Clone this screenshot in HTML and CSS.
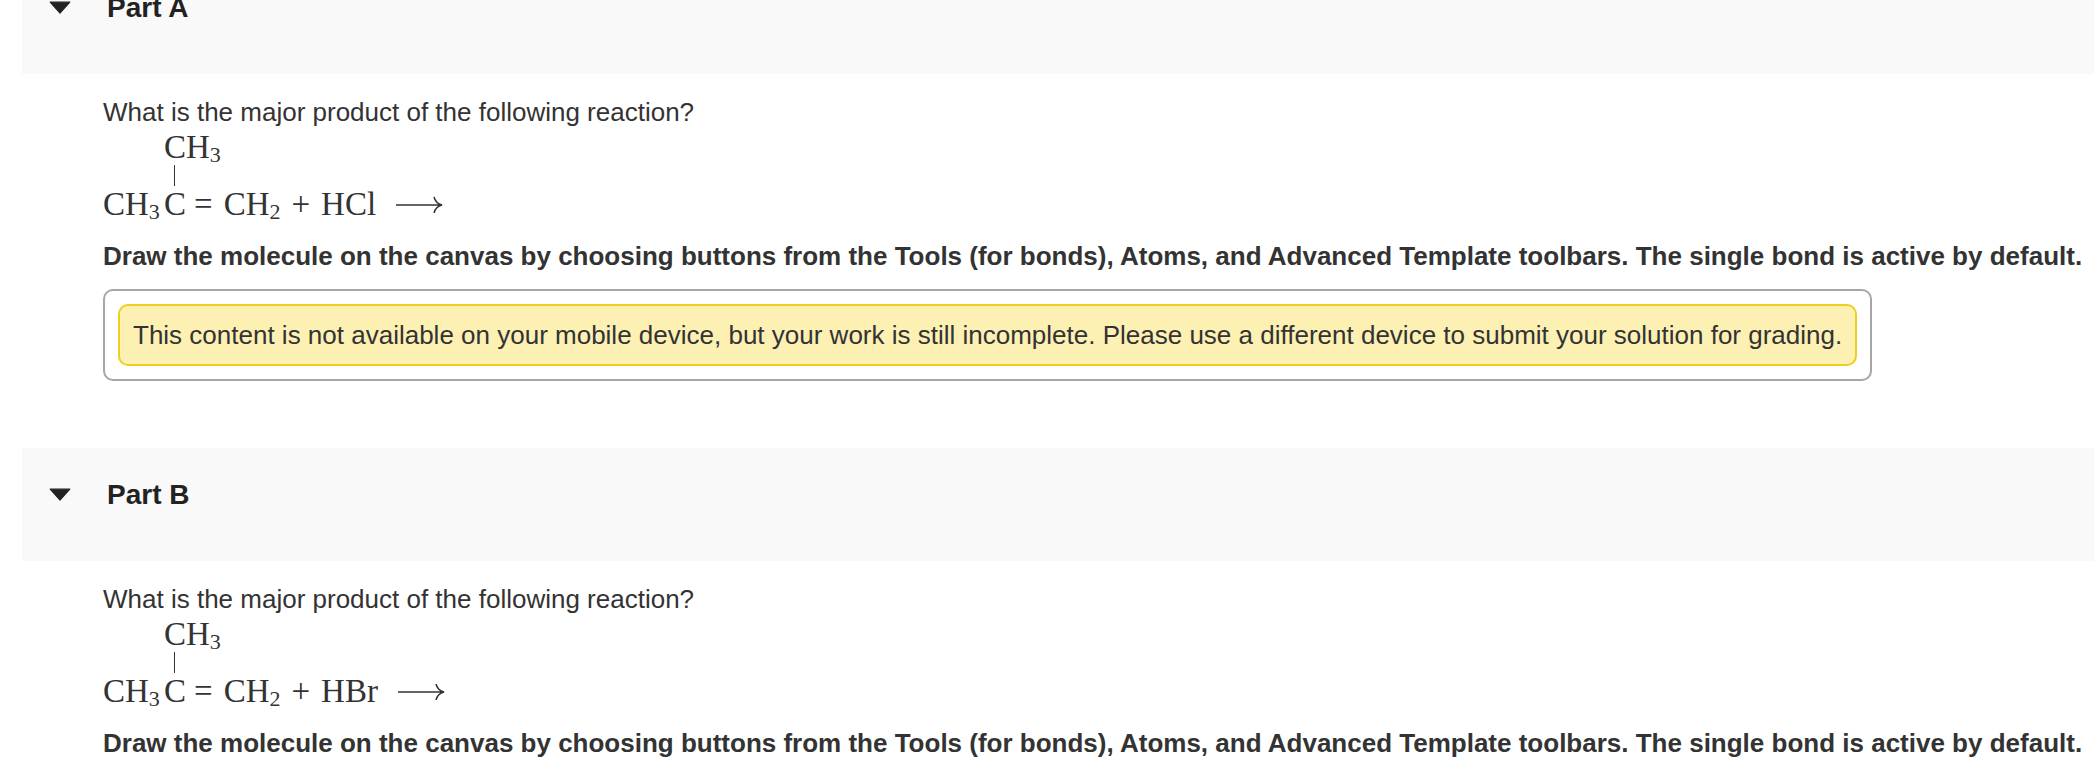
FILE: index.html
```
<!DOCTYPE html>
<html lang="en">
<head>
  <meta charset="UTF-8">
  <title>Major products</title>
  <link rel="stylesheet" href="styles.css">
</head>
<body>
  <main class="parts">
    <section class="part">
      <h2 class="part-header">
        <button class="part-toggle" type="button" aria-expanded="true">
          <svg class="caret" viewBox="0 0 22 13" aria-hidden="true"><path d="M2.500 1h17L11 10.500z"/></svg>
          Part A
        </button>
      </h2>
      <div class="part-body">
        <p class="question">What is the major product of the following reaction?</p>
        <div class="formula">
          <span class="branch">CH<sub>3</sub></span>
          <span class="bond"></span>
          <span class="left">CH<sub>3</sub></span>
          <span class="center">C</span>
          <span class="right">
            <span class="op">=</span>
            <span>CH<sub>2</sub></span>
            <span class="op">+</span>
            <span>HCl</span>
            <svg class="arrow" viewBox="0 0 48 18" role="img" aria-label="yields"><path d="M1 10h46M39 2c1 4 4 7 8 8c-4 1-7 4-8 8"/></svg>
          </span>
        </div>
        <p class="instructions">Draw the molecule on the canvas by choosing buttons from the Tools (for bonds), Atoms, and Advanced Template toolbars. The single bond is active by default.</p>
        <div class="answer">
          <p class="warning">This content is not available on your mobile device, but your work is still incomplete. Please use a different device to submit your solution for grading.</p>
        </div>
      </div>
    </section>

    <section class="part">
      <h2 class="part-header">
        <button class="part-toggle" type="button" aria-expanded="true">
          <svg class="caret" viewBox="0 0 22 13" aria-hidden="true"><path d="M2.500 1h17L11 10.500z"/></svg>
          Part B
        </button>
      </h2>
      <div class="part-body">
        <p class="question">What is the major product of the following reaction?</p>
        <div class="formula">
          <span class="branch">CH<sub>3</sub></span>
          <span class="bond"></span>
          <span class="left">CH<sub>3</sub></span>
          <span class="center">C</span>
          <span class="right">
            <span class="op">=</span>
            <span>CH<sub>2</sub></span>
            <span class="op">+</span>
            <span>HBr</span>
            <svg class="arrow" viewBox="0 0 48 18" role="img" aria-label="yields"><path d="M1 10h46M39 2c1 4 4 7 8 8c-4 1-7 4-8 8"/></svg>
          </span>
        </div>
        <p class="instructions">Draw the molecule on the canvas by choosing buttons from the Tools (for bonds), Atoms, and Advanced Template toolbars. The single bond is active by default.</p>
      </div>
    </section>
  </main>
</body>
</html>
```
FILE: styles.css
```
body {
  margin: 0;
  background: #fff;
  color: #333;
  font-family: "Liberation Sans", Arial, sans-serif;
  font-size: 26px;
  line-height: 30px;
}
p {
  margin: 0;
}
/* page is scrolled a little into the first part */
.parts {
  margin: -39px 3px 0 22px;
}
.part + .part {
  margin-top: 67px;
}
.part-header {
  box-sizing: border-box;
  height: 113px;
  margin: 0;
  padding: 31px 25px;
  background: #f9f9f9;
}
.part-toggle {
  display: flex;
  align-items: center;
  gap: 34px;
  padding: 0;
  border: 0;
  background: none;
  color: #222;
  font: bold 28px/32px "Liberation Sans", Arial, sans-serif;
}
.caret {
  width: 26px;
  height: 15px;
  fill: #222;
  stroke: #222;
  stroke-width: 1;
  stroke-linejoin: round;
}
.part-body {
  padding: 23px 0 0 81px;
}
.formula {
  display: grid;
  grid-template-columns: 61px 21px auto;
  grid-template-rows: 36px 21px 36px;
  justify-content: start;
  margin-top: 2px;
  font-family: "Liberation Serif", "Times New Roman", serif;
  font-size: 33px;
  line-height: 36px;
  white-space: nowrap;
}
.formula sub {
  font-size: 22px;
  line-height: 1;
  vertical-align: -4px;
}
.branch {
  grid-area: 1 / 2 / 2 / 4;
}
.bond {
  grid-area: 2 / 2;
  justify-self: center;
  width: 1px;
  background: #333;
}
.left {
  grid-area: 3 / 1;
}
.center {
  grid-area: 3 / 2;
}
.right {
  grid-area: 3 / 3;
  display: flex;
  align-items: baseline;
  gap: 10px;
  padding-left: 8px;
}
.op {
  margin: 0 1px;
}
.arrow {
  align-self: center;
  width: 48px;
  height: 18px;
  margin-left: 9px;
  fill: none;
  stroke: #333;
  stroke-width: 1.5;
}
.instructions {
  margin-top: 19px;
  font-weight: bold;
}
.answer {
  box-sizing: border-box;
  width: fit-content;
  margin-top: 18px;
  padding: 13px;
  border: 2px solid #a6a6a6;
  border-radius: 10px;
}
.warning {
  padding: 14px 13px;
  border: 2px solid #edd01f;
  border-radius: 10px;
  background: #fdf0b3;
}
```
